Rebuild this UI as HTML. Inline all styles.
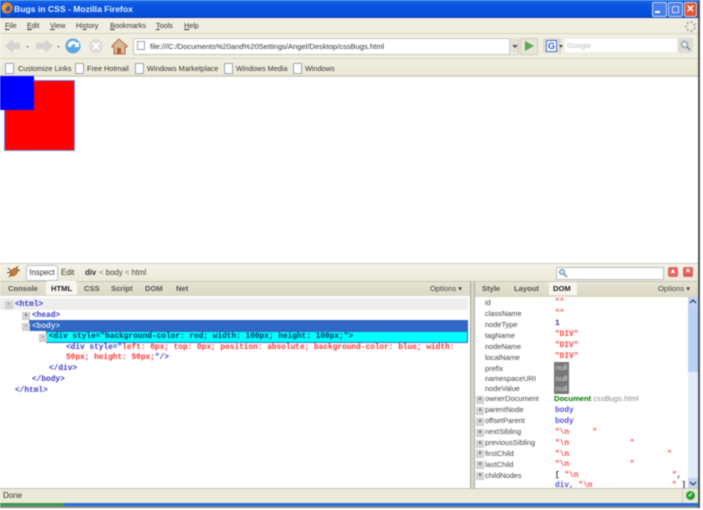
<!DOCTYPE html>
<html><head><meta charset="utf-8"><style>
html,body{margin:0;padding:0;background:#fff;width:703px;height:510px;overflow:hidden}
#r{position:absolute;left:0;top:0;width:703px;height:510px;overflow:hidden;filter:blur(.5px);font-family:"Liberation Sans",sans-serif;font-size:8.5px;color:#333}
#r div,#r span.a{position:absolute;white-space:pre}
.m{font-family:"Liberation Mono",monospace;font-size:7.8px;font-weight:bold;color:#3a3ad0}
.rd{color:#f33}
.k{color:#444;font-size:7.4px;margin-top:1px}
.v{font-family:"Liberation Mono",monospace;font-size:7.8px;font-weight:bold;color:#f44}
.nul{background:#777;color:#ddd;width:15px;height:11px;line-height:11px;text-align:center;font-size:7.5px}
.pl{width:6px;height:6px;background:#d5d5d5;border:1px solid #ccc;color:#444;font-size:7px;line-height:6px;text-align:center}
.doc{width:7px;height:9px;background:#fff;border:1px solid #9aa6b8}
.b{font-size:7.3px}
.mn{font-size:7.2px;top:21px}
.t{font-size:7.6px;font-weight:bold;top:284px;color:#555}
u{text-decoration:underline}
</style></head><body><div id="r">
<div style="left:0;top:0;width:698px;height:18px;background:linear-gradient(#1a6fe8,#0a54e0 30%,#0450dd 80%,#0a3fb8)"></div>
<svg style="position:absolute;left:1px;top:2px" width="12" height="12"><circle cx="6" cy="6" r="5.500" fill="#e8862a"/><circle cx="6.500" cy="6.500" r="3" fill="#3a5ab0"/><path d="M1 6a5 5 0 0 1 4-5l-1 3 4-1-3 3-1 4z" fill="#f0a030"/></svg>
<div style="left:14px;top:4px;color:#fff;font-size:8.6px;font-weight:bold;opacity:.9">Bugs in CSS - Mozilla Firefox</div>
<div style="left:652px;top:2px;width:13px;height:13px;background:#4a7ee8;border:1px solid #c8d8f8;border-radius:2px"></div>
<div style="left:655px;top:11px;width:5px;height:2px;background:#fff"></div>
<div style="left:668px;top:2px;width:13px;height:13px;background:#4a7ee8;border:1px solid #c8d8f8;border-radius:2px"></div>
<div style="left:672px;top:6px;width:5px;height:5px;border:1px solid #dde"></div>
<div style="left:684px;top:2px;width:11px;height:13px;background:#e0583a;border:1px solid #f0c8b8;border-radius:2px;color:#fff;font-size:10px;font-weight:bold;line-height:13px;text-align:center">✕</div>

<div style="left:0;top:18px;width:698px;height:15px;background:#f0eee0;border-bottom:1px solid #d8d5c4"></div>
<div class="mn" style="left:5px"><u>F</u>ile</div>
<div class="mn" style="left:27px"><u>E</u>dit</div>
<div class="mn" style="left:50px"><u>V</u>iew</div>
<div class="mn" style="left:76px">Hi<u>s</u>tory</div>
<div class="mn" style="left:110px"><u>B</u>ookmarks</div>
<div class="mn" style="left:156px"><u>T</u>ools</div>
<div class="mn" style="left:184px"><u>H</u>elp</div>
<div style="left:685px;top:21px;width:7px;height:7px;border:2px dotted #aaa;border-radius:50%"></div>

<div style="left:0;top:34px;width:698px;height:24px;background:#f0eee0;border-bottom:1px solid #d8d5c4"></div>
<svg style="position:absolute;left:3px;top:38px" width="180" height="18">
<path d="M2 8 L10 1 V5 H17 V11 H10 V15Z" fill="#d4d4d0"/><path d="M23 8h3l-1.500 2z" fill="#888"/>
<path d="M50 8 L42 1 V5 H33 V11 H42 V15Z" fill="#d4d4d0"/><path d="M54 8h3l-1.500 2z" fill="#888"/>
<circle cx="70" cy="8" r="7.500" fill="#5aa8e0"/><path d="M65 9a5 5 0 0 1 9-4l2-1v5h-5l2-2a3 3 0 0 0-5 2z" fill="#fff"/>
<circle cx="93" cy="8" r="7" fill="#dcdcd8"/><path d="M90 5l6 6M96 5l-6 6" stroke="#fff" stroke-width="2"/>
<path d="M109 8 L116 1 L124 8 V9 H122 V16 H111 V9 H109Z" fill="#dcb894" stroke="#b06a50"/><rect x="114" y="10" width="4" height="6" fill="#a5623a"/>
</svg>
<div style="left:133px;top:38px;width:384px;height:15px;background:#fff;border:1px solid #c8c6b8;border-radius:2px"></div>
<div style="left:137px;top:41px;width:6px;height:7px;background:#fff;border:1px solid #9aa6b8"></div>
<div style="left:150px;top:42px;font-size:7.55px;color:#333">file:///C:/Documents%20and%20Settings/Angel/Desktop/cssBugs.html</div>
<div style="left:509px;top:39px;width:1px;height:15px;background:#ccc"></div>
<div style="left:510px;top:38px;width:8px;height:15px;background:#e4e2d4"></div>
<div style="left:512px;top:45px;border:3px solid transparent;border-top:3px solid #555"></div>
<div style="left:520px;top:38px;width:16px;height:15px;background:#e8e6d8;border:1px solid #d0ceBe"></div>
<div style="left:525px;top:41px;border:5px solid transparent;border-left:9px solid #5aa85a;border-right:0"></div>
<div style="left:543px;top:38px;width:18px;height:15px;background:#dcdad0"></div>
<div style="left:546px;top:40px;width:9px;height:10px;background:#fff;border:1px solid #4a70d0;color:#3060d0;font-size:9px;font-weight:bold;line-height:10px;text-align:center">G</div>
<div style="left:559px;top:45px;border:2px solid transparent;border-top:3px solid #444"></div>
<div style="left:565px;top:39px;width:112px;height:13px;background:#fff;color:#bbb;font-size:7.5px;line-height:13px;text-indent:2px">Google</div>
<div style="left:678px;top:38px;width:15px;height:15px;background:#dcdcd4;border-radius:2px"></div>
<svg style="position:absolute;left:680px;top:40px" width="11" height="11"><circle cx="4.500" cy="4.500" r="3" fill="#e8f0f8" stroke="#789"/><path d="M7 7l3 3" stroke="#789" stroke-width="1.500"/></svg>

<div style="left:0;top:59px;width:698px;height:16px;background:linear-gradient(#f0eee0,#ebe8d6);border-bottom:2px solid #d4d2c4"></div>
<div class="doc" style="left:5px;top:63px"></div><div class="b" style="left:18px;top:64px">Customize Links</div>
<div class="doc" style="left:75px;top:63px"></div><div class="b" style="left:87px;top:64px">Free Hotmail</div>
<div class="doc" style="left:135px;top:63px"></div><div class="b" style="left:147px;top:64px">Windows Marketplace</div>
<div class="doc" style="left:224px;top:63px"></div><div class="b" style="left:236px;top:64px">Windows Media</div>
<div class="doc" style="left:293px;top:63px"></div><div class="b" style="left:305px;top:64px">Windows</div>

<div style="left:4px;top:80px;width:69px;height:69px;background:#f00;border:1px solid #6a90f0"></div>
<div style="left:0;top:76px;width:34px;height:34px;background:#00f"></div>

<div style="left:0;top:263px;width:698px;height:18px;background:linear-gradient(#f4f2e6,#ebe8d8);border-top:1px solid #d0cec4"></div>
<svg style="position:absolute;left:5px;top:264px" width="16" height="15"><ellipse cx="9" cy="8" rx="3.500" ry="5" transform="rotate(40 9 8)" fill="#c87830"/><path d="M3 4l3 3M2 9l4-1M4 13l3-3M13 2l-2 3M15 6l-3 1" stroke="#555"/></svg>
<div style="left:26px;top:265px;width:30px;height:14px;background:#fff;border:1px solid #b8c4d0;border-radius:2px;line-height:14px;text-align:center;font-size:7.8px">Inspect</div>
<div style="left:61px;top:268px;font-size:7.8px">Edit</div>
<div style="left:85px;top:268px;font-size:7.8px;font-weight:bold">div</div>
<div style="left:99px;top:268px;font-size:7.8px;color:#777">&lt; <span style="color:#444">body</span> &lt; <span style="color:#444">html</span></div>
<div style="left:556px;top:267px;width:106px;height:11px;background:#fff;border:1px solid #b8c0c8"></div>
<svg style="position:absolute;left:558px;top:268px" width="10" height="10"><circle cx="4" cy="4" r="2.500" fill="#d0e0f0" stroke="#68a"/><path d="M6 6l3 3" stroke="#68a" stroke-width="1.300"/></svg>
<div style="left:668px;top:267px;width:10px;height:10px;background:#e06868;border-radius:2px;color:#fff;font-size:7px;line-height:10px;text-align:center">▲</div>
<div style="left:683px;top:267px;width:10px;height:10px;background:#e06060;border-radius:2px;color:#fff;font-size:7px;font-weight:bold;line-height:10px;text-align:center">✕</div>

<div style="left:0;top:281px;width:698px;height:15px;background:linear-gradient(#e6e3d2,#dad7c4);border-top:1px solid #c8c6b4"></div>
<div style="left:46px;top:281px;width:31px;height:14px;background:#f6f5ee;border-radius:2px 2px 0 0"></div>
<div class="t" style="left:8px">Console</div>
<div class="t" style="left:51px;color:#222">HTML</div>
<div class="t" style="left:84px">CSS</div>
<div class="t" style="left:111px">Script</div>
<div class="t" style="left:145px">DOM</div>
<div class="t" style="left:176px">Net</div>
<div style="left:430px;top:284px;font-size:7.6px;color:#444">Options ▾</div>
<div style="left:549px;top:282px;width:28px;height:13px;background:#f6f5ee"></div>
<div class="t" style="left:482px">Style</div>
<div class="t" style="left:514px">Layout</div>
<div class="t" style="left:553px;color:#222">DOM</div>
<div style="left:658px;top:284px;font-size:7.6px;color:#444">Options ▾</div>

<div style="left:0;top:296px;width:470px;height:192px;background:#fff"></div>
<div style="left:0;top:298px;width:468px;height:12px;background:#eee"></div>
<div style="left:29px;top:320px;width:439px;height:11px;background:#3068c4"></div>
<div style="left:46px;top:331px;width:420px;height:10px;background:#0ff;border:1px solid #3068c4"></div>
<div class="pl" style="left:5px;top:301px">-</div><div class="pl" style="left:22px;top:312px">+</div><div class="pl" style="left:22px;top:323px">-</div><div class="pl" style="left:39px;top:334px">-</div>
<div class="m" style="left:15px;top:301px">&lt;html&gt;</div>
<div class="m" style="left:32px;top:312px">&lt;head&gt;</div>
<div class="m" style="left:32px;top:323px;color:#dde">&lt;body&gt;</div>
<div class="m" style="left:49px;top:333px;color:#036">&lt;div style="background-color: red; width: 100px; height: 100px;"&gt;</div>
<div class="m" style="left:66px;top:344px">&lt;div style="<span class="rd">left: 0px; top: 0px; position: absolute; background-color: blue; width:</span></div>
<div class="m rd" style="left:66px;top:354px">50px; height: 50px;<span style="color:#3a3ad0">"/&gt;</span></div>
<div class="m" style="left:49px;top:365px">&lt;/div&gt;</div>
<div class="m" style="left:32px;top:376px">&lt;/body&gt;</div>
<div class="m" style="left:15px;top:387px">&lt;/html&gt;</div>

<div style="left:470px;top:281px;width:3px;height:207px;background:#d8d6c6;border-left:1px solid #aaa8a0;border-right:1px solid #aaa8a0"></div>

<div class="k" style="left:485px;top:297px">id</div><div class="v" style="left:555px;top:299px">""</div>
<div class="k" style="left:485px;top:308px">className</div><div class="v" style="left:555px;top:310px">""</div>
<div class="k" style="left:485px;top:319px">nodeType</div><div class="v" style="left:555px;top:320px;color:#33a">1</div>
<div class="k" style="left:485px;top:330px">tagName</div><div class="v" style="left:555px;top:331px">"DIV"</div>
<div class="k" style="left:485px;top:341px">nodeName</div><div class="v" style="left:555px;top:342px">"DIV"</div>
<div class="k" style="left:485px;top:352px">localName</div><div class="v" style="left:555px;top:353px">"DIV"</div>
<div class="k" style="left:485px;top:363px">prefix</div><div class="nul" style="left:554px;top:362px">null</div>
<div class="k" style="left:485px;top:373px">namespaceURI</div><div class="nul" style="left:554px;top:373px">null</div>
<div class="k" style="left:485px;top:383px">nodeValue</div><div class="nul" style="left:554px;top:383px">null</div>
<div class="pl" style="left:476px;top:396px">+</div><div class="k" style="left:485px;top:393px">ownerDocument</div><div style="left:554px;top:394px;font-weight:bold;color:#070;font-size:7.6px">Document <i style="font-weight:normal;color:#888">cssBugs.html</i></div>
<div class="pl" style="left:476px;top:407px">+</div><div class="k" style="left:485px;top:404px">parentNode</div><div class="v" style="left:555px;top:407px;color:#55d">body</div>
<div class="pl" style="left:476px;top:418px">+</div><div class="k" style="left:485px;top:415px">offsetParent</div><div class="v" style="left:555px;top:418px;color:#55d">body</div>
<div class="pl" style="left:476px;top:429px">+</div><div class="k" style="left:485px;top:426px">nextSibling</div><div class="v" style="left:555px;top:429px">"\n     "</div>
<div class="pl" style="left:476px;top:440px">+</div><div class="k" style="left:485px;top:437px">previousSibling</div><div class="v" style="left:555px;top:440px">"\n             "</div>
<div class="pl" style="left:476px;top:450px">+</div><div class="k" style="left:485px;top:448px">firstChild</div><div class="v" style="left:555px;top:451px">"\n                     "</div>
<div class="pl" style="left:476px;top:461px">+</div><div class="k" style="left:485px;top:459px">lastChild</div><div class="v" style="left:555px;top:461px">"\n             "</div>
<div class="pl" style="left:476px;top:472px">+</div><div class="k" style="left:485px;top:470px">childNodes</div>
<div class="v" style="left:555px;top:472px;color:#333">[ <span style="color:#f44">"\n                    "</span>,</div>
<div class="v" style="left:555px;top:482px;color:#55d">div, <span style="color:#f44">"\n                 "</span> <span style="color:#333">]</span></div>

<div style="left:688px;top:297px;width:10px;height:191px;background:#e4ecfa"></div>
<div style="left:688px;top:297px;width:10px;height:10px;background:#c0d4f4"></div>
<svg style="position:absolute;left:688px;top:297px" width="10" height="10"><path d="M2 6l3-3 3 3" fill="none" stroke="#345" stroke-width="1.300"/></svg>
<div style="left:688px;top:307px;width:10px;height:65px;background:#b8d0f4"></div>
<div style="left:688px;top:478px;width:10px;height:10px;background:#c0d4f4"></div>
<svg style="position:absolute;left:688px;top:478px" width="10" height="10"><path d="M2 4l3 3 3-3" fill="none" stroke="#345" stroke-width="1.300"/></svg>

<div style="left:0;top:488px;width:698px;height:15px;background:#ebe9d8;border-top:1px solid #c4c2b4"></div>
<div style="left:3px;top:491px;font-size:8px">Done</div>
<div style="left:682px;top:490px;width:1px;height:13px;background:#ccc"></div>
<div style="left:686px;top:491px;width:9px;height:9px;background:#2aa02a;border-radius:50%;color:#fff;font-size:7px;font-weight:bold;line-height:9px;text-align:center">✓</div>
<div style="left:0;top:503px;width:698px;height:3px;background:#2a70e0"></div>
<div style="left:0;top:503px;width:64px;height:3px;background:#3a9a50"></div>
<div style="left:0;top:506px;width:700px;height:2px;background:#666;opacity:.8"></div>
<div style="left:698px;top:0;width:2px;height:508px;background:#555"></div>
</div></body></html>
